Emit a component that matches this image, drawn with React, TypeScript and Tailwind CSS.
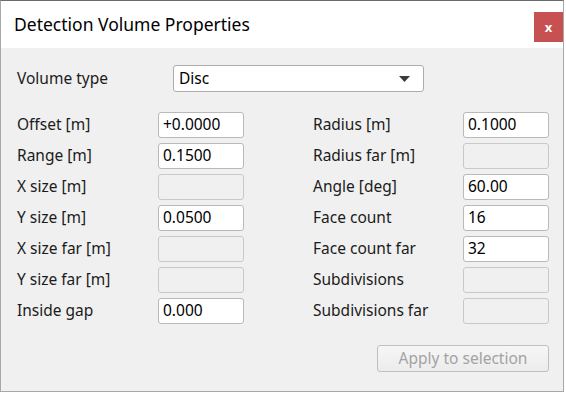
import React from 'react';

type Field = { label: string; value?: string; enabled: boolean };

const leftFields: Field[] = [
  { label: 'Offset [m]', value: '+0.0000', enabled: true },
  { label: 'Range [m]', value: '0.1500', enabled: true },
  { label: 'X size [m]', enabled: false },
  { label: 'Y size [m]', value: '0.0500', enabled: true },
  { label: 'X size far [m]', enabled: false },
  { label: 'Y size far [m]', enabled: false },
  { label: 'Inside gap', value: '0.000', enabled: true },
];

const rightFields: Field[] = [
  { label: 'Radius [m]', value: '0.1000', enabled: true },
  { label: 'Radius far [m]', enabled: false },
  { label: 'Angle [deg]', value: '60.00', enabled: true },
  { label: 'Face count', value: '16', enabled: true },
  { label: 'Face count far', value: '32', enabled: true },
  { label: 'Subdivisions', enabled: false },
  { label: 'Subdivisions far', enabled: false },
];

const FieldRow: React.FC<{ field: Field; labelWidth: string }> = ({ field, labelWidth }) => (
  <div className="flex items-center h-[26px]">
    <span className={`${labelWidth} text-[#1b1b1b]`}>{field.label}</span>
    <div
      className={
        field.enabled
          ? 'w-[86px] h-[26px] rounded-[3px] border border-[#b9b9b9] bg-white px-[4px] flex items-center text-black'
          : 'w-[86px] h-[26px] rounded-[3px] border border-[#c9c9c9] bg-[#f0f0f0]'
      }
    >
      {field.value}
    </div>
  </div>
);

export default function App() {
  return (
    <div className="w-[566px] h-[393px] bg-white" style={{ fontFamily: '"Noto Sans", sans-serif' }}>
      <div className="w-[564px] h-[392px] flex flex-col border-t border-l border-r border-b border-t-[#6a6a6a] border-l-[#a8a8a8] border-r-[#a8a8a8] border-b-[#a8a8a8]">
        <div className="h-[47px] bg-white flex items-start justify-between">
          <span className="pl-[13px] pt-[11px] text-[17.5px] leading-[24px] text-black">Detection Volume Properties</span>
          <div className="mt-[11px] w-[29px] h-[30px] bg-[#c75050] flex items-center justify-center text-white text-[13px] font-bold leading-none">
            x
          </div>
        </div>
        <div className="flex-1 bg-[#f0f0f0] pl-[16px] pt-[17px] text-[15.5px] leading-none">
          <div className="flex items-center h-[27px]">
            <span className="w-[156px] text-[#1b1b1b]">Volume type</span>
            <div className="w-[251px] h-[27px] rounded-[3px] border border-[#adadad] bg-white flex items-center justify-between pl-[5px] pr-[13px] text-black">
              <span>Disc</span>
              <svg width="11" height="6" viewBox="0 0 11 6">
                <polygon points="0,0 11,0 5.5,6" fill="#3c3c3c" />
              </svg>
            </div>
          </div>
          <div className="flex mt-[20px]">
            <div className="flex flex-col gap-[5px] w-[296px]">
              {leftFields.map((f) => (
                <FieldRow key={f.label} field={f} labelWidth="w-[141px]" />
              ))}
            </div>
            <div className="flex flex-col gap-[5px]">
              {rightFields.map((f) => (
                <FieldRow key={f.label} field={f} labelWidth="w-[150px]" />
              ))}
            </div>
          </div>
          <div className="flex justify-end w-[532px] mt-[21px]">
            <div className="w-[172px] h-[27px] rounded-[3px] border border-[#bfbfbf] bg-gradient-to-b from-[#f6f6f6] to-[#ececec] flex items-center justify-center text-[#a3a3a3]">
              Apply to selection
            </div>
          </div>
        </div>
      </div>
    </div>
  );
}
